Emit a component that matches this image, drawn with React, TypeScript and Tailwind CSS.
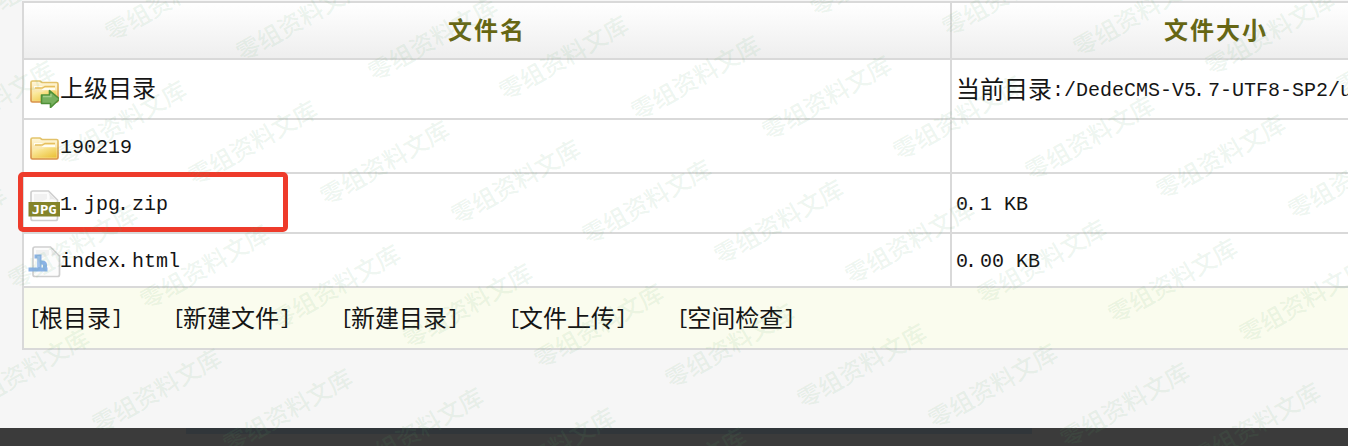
import { Fragment } from "react";
import type { ReactNode } from "react";

const marks: { x: number; y: number }[] = [];
for (let j = -2; j <= 4; j++) {
  for (let i = -3; i <= 12; i++) {
    const x = 116 + i * 131.4 - j * 48.3;
    const y = 26.5 + i * 19.8 + j * 124;
    if (x > -125 && x < 1360 && y > -8 && y < 512) marks.push({ x, y });
  }
}

function Watermark() {
  return (
    <div aria-hidden="true" className="pointer-events-none absolute inset-0 z-20 overflow-hidden">
      {marks.map((m) => (
        <span
          key={`${m.x}-${m.y}`}
          className="absolute w-[150px] text-center whitespace-nowrap font-['Noto_Sans_CJK_SC',sans-serif] text-[24px] leading-[26px] font-medium text-[#5aa86a]/11"
          style={{ left: m.x + 53 - 75, top: m.y - 28.5 - 13, transform: "rotate(-29.7deg)" }}
        >
          零组资料文库
        </span>
      ))}
    </div>
  );
}

function FolderIcon({ up = false }: { up?: boolean }) {
  return (
    <svg width="32" height="32" viewBox="0 0 32 32" className={up ? "mt-[5px] shrink-0" : "mt-[6px] shrink-0"}>
      <defs>
        <linearGradient id="flap" x1="0" y1="0" x2="0" y2="1">
          <stop offset="0" stopColor="#fff7dc" />
          <stop offset="1" stopColor="#f5d77a" />
        </linearGradient>
        <linearGradient id="front" x1="0" y1="0" x2="1" y2="1">
          <stop offset="0" stopColor="#fff3b5" />
          <stop offset="1" stopColor="#eabf32" />
        </linearGradient>
        <linearGradient id="edge" x1="0" y1="0" x2="0" y2="1">
          <stop offset="0" stopColor="#e3c56c" />
          <stop offset="1" stopColor="#d8924a" />
        </linearGradient>
      </defs>
      <path d="M4 24.500V6.500Q4 5 5.500 5H13l2 1.500H29.500Q31 6.500 31 8V24.500Q31 26 29.500 26H5.500Q4 26 4 24.500Z" fill="url(#flap)" stroke="url(#edge)" strokeWidth="1.7" />
      <path d="M7 11H14L16 13H28" fill="none" stroke="#fffdf1" strokeWidth="2" />
      <path d="M8 12H15.500L18 10.500H28" fill="none" stroke="#e6bf5e" strokeWidth="1.4" />
      <path d="M6 16.500L15.500 16L18 14.500H29.500V24.500H6Z" fill="url(#front)" />
      {up && <path d="M14.500 19H22.500V14.500L32.500 23L23.500 31.500V27.500H14.500Z" fill="#78b05f" stroke="#4f9038" strokeWidth="1.6" strokeLinejoin="round" />}
      {up && <path d="M16 20.500H24V18" fill="none" stroke="#a4cd8b" strokeWidth="1.3" />}
    </svg>
  );
}

function Sheet({ dx = 0 }: { dx?: number }) {
  return (
    <g transform={`translate(${dx} 0)`}>
      <path d="M4 3Q4 1 6 1H21.500L30.500 10V28.500Q30.500 30.500 28.500 30.500H6Q4 30.500 4 28.500Z" fill="#fcfcfc" stroke="#cfcfcf" strokeWidth="1.7" />
      <path d="M21 2Q23.500 6 22.500 9.500Q26 8.500 29.500 10.500Z" fill="#e9e9e9" />
      <path d="M7 4H20V9L7 15Z" fill="#f1f1f1" />
    </g>
  );
}

function JpgIcon() {
  return (
    <svg width="32" height="32" viewBox="0 0 32 32" className="mt-[5px] shrink-0 overflow-visible">
      <Sheet />
      <rect x="1.500" y="12" width="31.500" height="14.500" fill="#84842a" />
      <text x="17.200" y="23.700" textAnchor="middle" textLength="25" lengthAdjust="spacingAndGlyphs" fill="#fff" className="font-['DejaVu_Sans_Mono',monospace] text-[12.500px] font-bold">
        JPG
      </text>
    </svg>
  );
}

function HtmlIcon() {
  return (
    <svg width="32" height="32" viewBox="0 0 32 32" className="mt-[3px] shrink-0 overflow-visible">
      <Sheet dx={2} />
      <path d="M7.500 10.500H12.500V23M12.500 16.500H15Q18 16.500 18 19V23M1.500 23.500H20.500" fill="none" stroke="#7daae2" strokeWidth="4" opacity=".9" />
      <path d="M11.500 10V21" stroke="#a3c3ec" strokeWidth="2.500" />
    </svg>
  );
}

/** Fixed-width text whose full stops sit at the left of their cell. */
function Mono({ text }: { text: string }) {
  return (
    <span>
      {text.split(".").map((part, i) => (
        <Fragment key={i}>
          {i > 0 && <span className="mr-[3px] -ml-[3px]">.</span>}
          {part}
        </Fragment>
      ))}
    </span>
  );
}

function Row({ icon, name, size, className }: { icon: ReactNode; name: ReactNode; size?: ReactNode; className: string }) {
  return (
    <div className={`flex border-b-2 border-[#d9d9d9] ${className}`}>
      <div className="flex w-[928px] shrink-0 items-center border-r-2 border-[#d9d9d9] pl-[3px]">
        {icon}
        <span className="flex items-center pt-[3px] pl-[1px]">{name}</span>
      </div>
      <div className="flex min-w-0 flex-1 items-center pt-[3px] pl-[4px]">{size}</div>
    </div>
  );
}

const actions = ["根目录", "新建文件", "新建目录", "文件上传", "空间检查"];

export default function App() {
  return (
    <div className="relative flex h-[446px] w-[1348px] flex-col overflow-hidden bg-[#f6f6f6] font-['Liberation_Mono','Noto_Sans_CJK_SC',monospace] text-[20px] leading-[30px] whitespace-pre text-[#151515]">
      <main className="h-[428px] shrink-0 pt-px pl-[22px]">
        <div className="w-[1500px] border-t-2 border-l-2 border-[#d9d9d9] bg-white">
          <div className="flex h-[57px] border-b-2 border-[#d9d9d9] bg-linear-to-b from-white to-[#eeeeee] pb-[3px] font-['Noto_Sans_CJK_SC',sans-serif] text-[24px] font-bold tracking-[2px] text-[#666614]">
            <div className="-mb-[3px] flex w-[928px] shrink-0 items-center justify-center border-r-2 border-[#d9d9d9] pb-[3px]">文件名</div>
            <div className="flex w-[528px] items-center justify-center">文件大小</div>
          </div>
          <Row
            className="h-[60px]"
            icon={<FolderIcon up />}
            name={<span className="text-[24px]">上级目录</span>}
            size={
              <>
                <span className="mt-[3px] text-[24px]">当前目录</span>
                <Mono text=":/DedeCMS-V5.7-UTF8-SP2/u" />
              </>
            }
          />
          <Row className="h-[54px]" icon={<FolderIcon />} name="190219" />
          <Row className="h-[60px]" icon={<JpgIcon />} name={<Mono text="1.jpg.zip" />} size={<Mono text="0.1 KB" />} />
          <Row className="h-[54px]" icon={<HtmlIcon />} name={<Mono text="index.html" />} size={<Mono text="0.00 KB" />} />
          <div className="flex h-[62px] items-center gap-[48px] border-b-2 border-[#d9d9d9] bg-[#fafcee] pt-[5px] pl-[3px]">
            {actions.map((a) => (
              <span key={a} className="flex items-center">
                <span className="-mt-[3px] -mr-[2px] ml-[2px]">[</span>
                <span className="text-[24px]">{a}</span>
                <span className="-mt-[3px]">]</span>
              </span>
            ))}
          </div>
        </div>
      </main>
      <footer className="h-[18px] bg-[#3b3b3b] pl-[186px]">
        <div className="h-[6px] w-[846px] bg-[#31363a]" />
      </footer>
      <div className="absolute top-[172px] left-[18px] z-10 h-[60px] w-[270px] rounded-[5px] border-[5px] border-[#ee3b2b]" />
      <Watermark />
    </div>
  );
}
